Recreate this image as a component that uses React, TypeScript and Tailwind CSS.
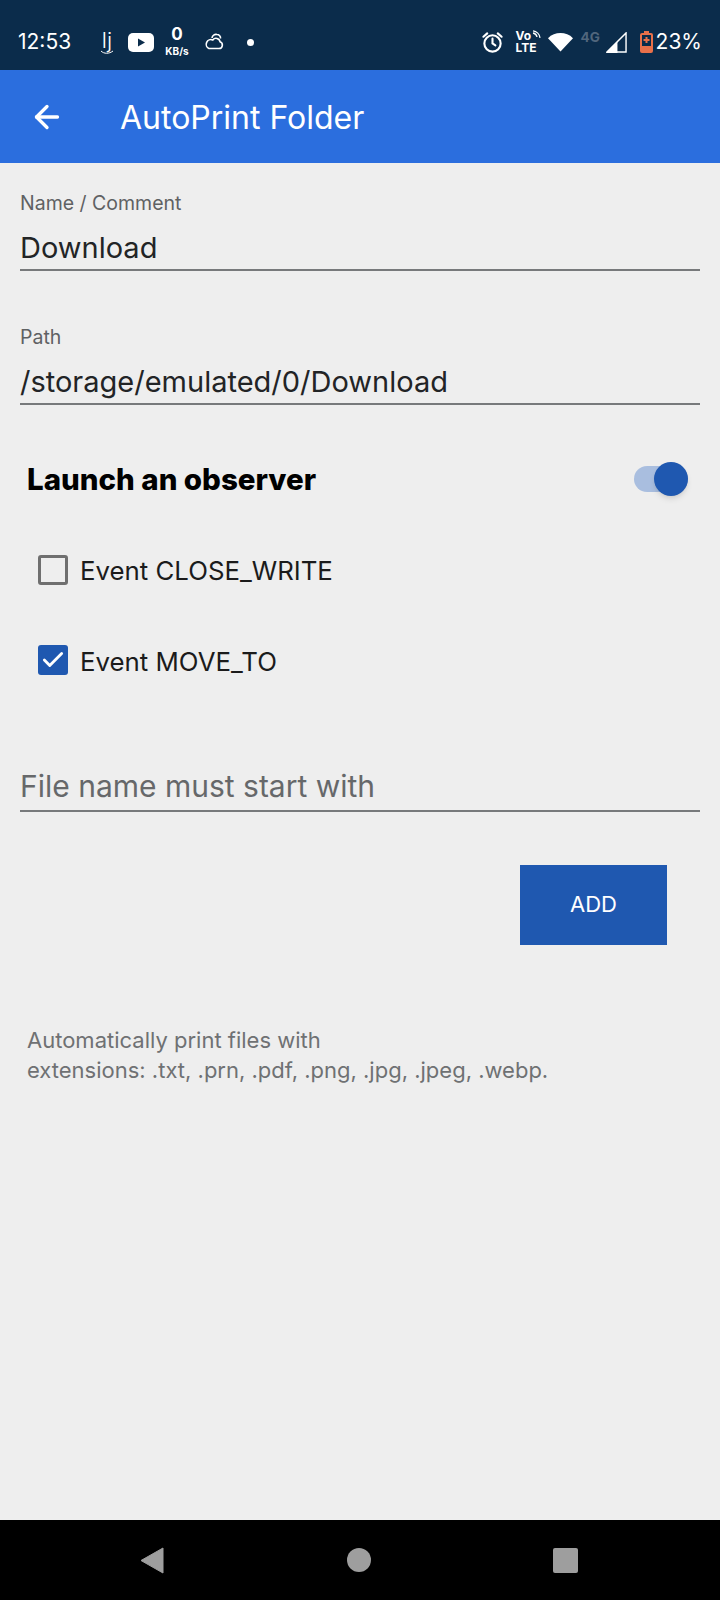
import React from 'react';
import { ArrowLeft, Check } from 'lucide-react';

const Field: React.FC<{ label?: string; value: string; muted?: boolean }> = ({ label, value, muted }) => (
  <div className="mx-5 border-b-2 border-[#77797b]">
    {label && <div className="text-[19.5px] leading-[22px] text-[#5f6163] mb-[16px]">{label}</div>}
    <div className={`leading-[36px] ${muted ? 'text-[30px] text-[#66686a] pb-[6px]' : 'text-[29px] text-[#222426] pb-[3px]'}`}>{value}</div>
  </div>
);

const StatusBar = () => (
  <div className="h-[70px] bg-[#0b2c4b] flex items-center text-white pl-[18px] pr-[18px] pt-[14px] shrink-0">
    <span className="text-[21px] w-[81px]">12:53</span>
    <div className="w-[16px] flex flex-col items-center">
      <span className="text-[22px] font-light leading-[20px]">lj</span>
      <svg width="14" height="5" viewBox="0 0 14 5" fill="none" stroke="#fff" strokeWidth="1">
        <path d="M1 1c3 3 8 3 12 0" />
      </svg>
    </div>
    <svg width="26" height="19" viewBox="0 0 26 19" className="ml-[13px]">
      <rect width="26" height="19" rx="5" fill="#fff" />
      <path d="M10 5.5 L17 9.5 L10 13.5 Z" fill="#0b2c4b" />
    </svg>
    <div className="ml-[10px] w-[26px] flex flex-col items-center">
      <div className="text-[17px] font-bold leading-[15px]">0</div>
      <div className="text-[10px] font-bold leading-[11px] mt-[4px]">KB/s</div>
    </div>
    <svg width="20" height="18" viewBox="0 0 20 18" fill="none" stroke="#fff" strokeWidth="1.6" className="ml-[14px]">
      <path d="M5 15.5h10a3.5 3.5 0 0 0 1-6.8 4 4 0 0 0-7.2-1.7A4.2 4.2 0 0 0 5 15.5z" />
      <path d="M8 5a4 4 0 0 1 5-3.5 3.5 3.5 0 0 1 3.5 4" />
    </svg>
    <div className="ml-[23px] w-[7px] h-[7px] rounded-full bg-white" />
    <div className="flex-1" />
    <svg width="23" height="23" viewBox="0 0 24 24" fill="none" stroke="#fff" strokeWidth="2.2" strokeLinecap="round">
      <circle cx="12" cy="13" r="8.5" />
      <path d="M12 8v5l3 2M2.5 6l4-3.5M21.5 6l-4-3.5" />
    </svg>
    <div className="ml-[12px] w-[30px] text-[12px] font-bold leading-[12px]">
      <div className="flex items-start">
        <span>Vo</span>
        <svg width="11" height="10" viewBox="0 0 11 10" fill="none" stroke="#fff" strokeWidth="1.3" className="ml-[1px]">
          <path d="M1 3a5 5 0 0 1 4 4M1 0.8a8 8 0 0 1 7 7" />
        </svg>
      </div>
      <div>LTE</div>
    </div>
    <svg width="25" height="20" viewBox="0 0 26 20" className="ml-[2px]">
      <path d="M0 6 C7 -1 19 -1 26 6 L13 20 Z" fill="#fff" />
    </svg>
    <span className="ml-[8px] w-[20px] text-[13.5px] font-bold text-[#51667c] -mt-[10px]">4G</span>
    <svg width="21" height="21" viewBox="0 0 22 22" className="ml-[5px]">
      <path d="M1 21 L21 1 V21 Z" fill="none" stroke="#fff" strokeWidth="1.5" />
      <path d="M0 22 L12 10 V22 Z" fill="#fff" />
    </svg>
    <svg width="13" height="22" viewBox="0 0 13 22" className="ml-[13px]">
      <rect x="4" y="0" width="5" height="3" fill="#e9704a" />
      <rect x="1" y="3" width="11" height="18" rx="1" fill="none" stroke="#e9704a" strokeWidth="2" />
      <rect x="1" y="15" width="11" height="6" fill="#e9704a" />
      <path d="M6.5 6v6M3.5 9h6" stroke="#e9704a" strokeWidth="2" />
    </svg>
    <span className="ml-[3px] text-[21px]">23%</span>
  </div>
);

export default function App() {
  return (
    <div className="w-[720px] h-[1600px] flex flex-col bg-[#eeeeee] font-['Inter',sans-serif]">
      <StatusBar />
      <div className="h-[93px] bg-[#2b6ede] flex items-center text-white shrink-0">
        <ArrowLeft size={36} strokeWidth={2.2} className="ml-[29px]" />
        <span className="ml-[55px] text-[32px] font-normal leading-[40px] mt-[2px]">AutoPrint Folder</span>
      </div>

      <div className="flex-1 pt-[29px]">
        <Field label="Name / Comment" value="Download" />
        <div className="h-[55px]" />
        <Field label="Path" value="/storage/emulated/0/Download" />

        <div className="mt-[52px] flex items-center justify-between pl-[27px] pr-[32px]">
          <span className="text-[29.5px] font-extrabold text-black">Launch an observer</span>
          <div className="relative w-[54px] h-[26px] rounded-full bg-[#a9bedf]">
            <div className="absolute right-0 -top-[4px] w-[34px] h-[34px] rounded-full bg-[#1f58b0] shadow-md" />
          </div>
        </div>

        <div className="mt-[49px] flex items-center pl-[38px]">
          <div className="w-[30px] h-[30px] rounded-[3px] border-[3px] border-[#6f6f6f]" />
          <span className="ml-[12px] text-[25.8px] text-[#1b1b1b] translate-y-[2px]">Event CLOSE_WRITE</span>
        </div>
        <div className="mt-[52px] flex items-center pl-[38px]">
          <div className="w-[30px] h-[30px] rounded-[3px] bg-[#1f58b0] flex items-center justify-center">
            <Check size={26} strokeWidth={2.6} color="#fff" />
          </div>
          <span className="ml-[12px] text-[25.8px] text-[#1b1b1b] translate-y-[2px]">Event MOVE_TO</span>
        </div>

        <div className="mt-[88px]">
          <Field value="File name must start with" muted />
        </div>

        <div className="mt-[53px] flex justify-end pr-[53px]">
          <button className="w-[147px] h-[80px] bg-[#1f58b0] text-white text-[22px]">ADD</button>
        </div>

        <p className="mt-[80px] ml-[27px] text-[22px] leading-[30px] text-[#6f7173]">
          Automatically print files with
          <br />
          extensions: .txt, .prn, .pdf, .png, .jpg, .jpeg, .webp.
        </p>
      </div>

      <div className="h-[80px] bg-black flex items-center shrink-0 pl-[140px] pr-[142px] justify-between">
        <svg width="24" height="27" viewBox="0 0 24 27">
          <path d="M23 1 V26 L1 13.5 Z" fill="#9e9e9e" stroke="#9e9e9e" strokeLinejoin="round" />
        </svg>
        <div className="w-[24px] h-[24px] rounded-full bg-[#9e9e9e]" />
        <div className="w-[25px] h-[25px] rounded-[2px] bg-[#9e9e9e]" />
      </div>
    </div>
  );
}
